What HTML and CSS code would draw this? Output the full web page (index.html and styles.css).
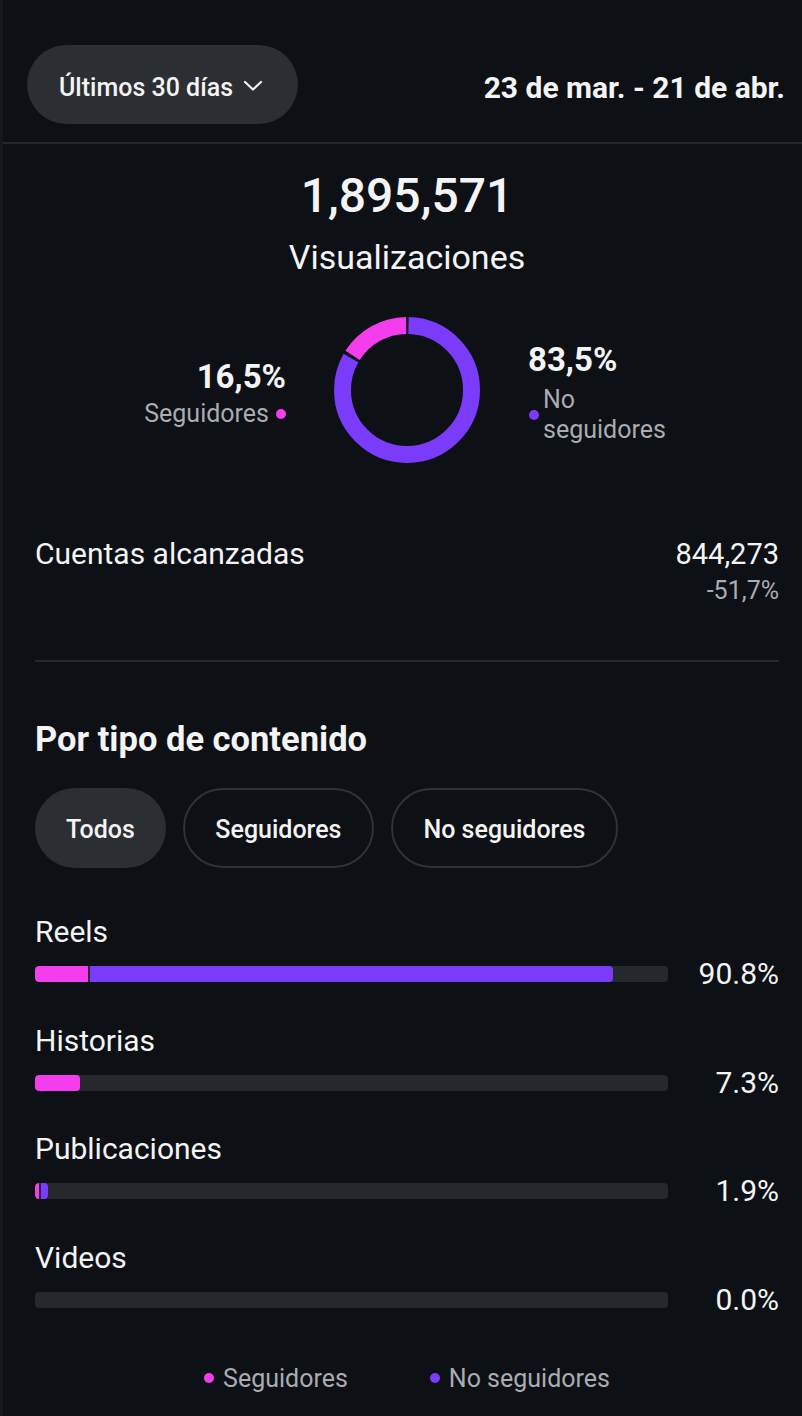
FILE: index.html
```html
<!DOCTYPE html>
<html lang="es">
<head>
<meta charset="utf-8">
<title>Visualizaciones</title>
<link rel="stylesheet" href="styles.css">
</head>
<body>
<div class="screen">
  <header class="topbar">
    <button class="range">Últimos 30 días
      <svg class="chev" width="22" height="12" viewBox="0 0 22 12"><polyline points="3,2 11,9.5 19,2" fill="none" stroke="#f2f2f2" stroke-width="2.2" stroke-linecap="round" stroke-linejoin="round"/></svg>
    </button>
    <div class="dates">23 de mar. - 21 de abr.</div>
  </header>

  <main class="content">
    <section class="summary">
      <div class="total">1,895,571</div>
      <div class="total-label">Visualizaciones</div>
      <div class="split">
        <div class="side side-left">
          <div class="pct">16,5%</div>
          <div class="key key-left"><span>Seguidores</span><i class="dot pink"></i></div>
        </div>
        <svg class="donut" width="146" height="146" viewBox="0 0 146 146">
          <g transform="rotate(-90 73 73)">
            <circle cx="73" cy="73" r="64.5" fill="none" stroke="#7a3bfb" stroke-width="17" stroke-dasharray="335.4 405.27" stroke-dashoffset="-1.5"/>
            <circle cx="73" cy="73" r="64.5" fill="none" stroke="#f43ded" stroke-width="17" stroke-dasharray="63.87 405.27" stroke-dashoffset="-339.9"/>
          </g>
        </svg>
        <div class="side side-right">
          <div class="pct">83,5%</div>
          <div class="key key-right"><i class="dot purple"></i><span class="wrap">No seguidores</span></div>
        </div>
      </div>
    </section>

    <div class="metric">
      <div class="metric-name">Cuentas alcanzadas</div>
      <div class="metric-values">
        <div class="metric-value">844,273</div>
        <div class="metric-delta">-51,7%</div>
      </div>
    </div>

    <hr class="divider">

    <h2 class="heading">Por tipo de contenido</h2>

    <div class="chips">
      <button class="chip chip-active">Todos</button>
      <button class="chip">Seguidores</button>
      <button class="chip">No seguidores</button>
    </div>

    <div class="types">
      <div class="type">
        <div class="type-name">Reels</div>
        <div class="type-bar">
          <div class="track">
            <div class="seg seg-pink" style="width:8.4%"></div>
            <div class="seg seg-purple" style="width:82.6%"></div>
          </div>
          <div class="type-pct">90.8%</div>
        </div>
      </div>
      <div class="type">
        <div class="type-name">Historias</div>
        <div class="type-bar">
          <div class="track">
            <div class="seg seg-pink seg-end" style="width:7.1%"></div>
          </div>
          <div class="type-pct">7.3%</div>
        </div>
      </div>
      <div class="type">
        <div class="type-name">Publicaciones</div>
        <div class="type-bar">
          <div class="track">
            <div class="seg seg-pink" style="width:0.7%"></div>
            <div class="seg seg-purple" style="width:1.1%"></div>
          </div>
          <div class="type-pct">1.9%</div>
        </div>
      </div>
      <div class="type">
        <div class="type-name">Videos</div>
        <div class="type-bar">
          <div class="track"></div>
          <div class="type-pct">0.0%</div>
        </div>
      </div>
    </div>

    <div class="legend">
      <div class="legend-item"><i class="dot small pink"></i><span>Seguidores</span></div>
      <div class="legend-item"><i class="dot small purple"></i><span>No seguidores</span></div>
    </div>
  </main>
</div>
</body>
</html>
```

FILE: styles.css
```css
* { box-sizing: border-box; }

html, body {
  margin: 0;
  padding: 0;
  background: #0d1014;
}

body {
  font-family: Roboto, "Noto Sans", "Liberation Sans", sans-serif;
  color: #f4f4f5;
}

.screen {
  min-height: 1416px;
  border-left: 3px solid #15181c;
  background: #0d1014;
}

/* Header */
.topbar {
  display: flex;
  align-items: center;
  justify-content: space-between;
  padding: 45px 17px 18px 24px;
  border-bottom: 2px solid #24272c;
}

.range {
  display: flex;
  align-items: center;
  gap: 9px;
  height: 79px;
  padding: 6px 34px 0 32px;
  border: none;
  border-radius: 40px;
  background: #2b2e33;
  color: #f4f4f5;
  font-family: inherit;
  font-size: 25px;
  font-weight: 500;
  line-height: 30px;
}

.chev { display: block; margin-top: -4px; }

.dates {
  font-size: 30px;
  font-weight: 700;
  line-height: 36px;
  margin-top: 7px;
}

/* Content */
.content {
  padding: 0 23px 0 32px;
}

.summary {
  display: flex;
  flex-direction: column;
  align-items: center;
}

.total {
  margin-top: 24px;
  font-size: 48px;
  font-weight: 500;
  line-height: 56px;
}

.total-label {
  margin-top: 13px;
  font-size: 34px;
  line-height: 40px;
}

.split {
  margin-top: 40px;
  width: 100%;
  display: grid;
  grid-template-columns: 1fr auto 1fr;
  column-gap: 48px;
  align-items: center;
}

.donut { display: block; }

.side { padding-top: 6px; }

.side-left {
  display: flex;
  flex-direction: column;
  align-items: flex-end;
}

.side-right {
  display: flex;
  flex-direction: column;
  align-items: flex-start;
}

.pct {
  font-size: 33px;
  font-weight: 700;
  line-height: 38px;
}

.key {
  display: flex;
  align-items: center;
  font-size: 25px;
  line-height: 30px;
  color: #a9acb1;
}

.key-left { margin-top: 3px; gap: 7px; }
.key-right { margin-top: 6px; gap: 4px; padding-left: 1px; }

.wrap { width: 130px; }

.dot {
  display: block;
  width: 10px;
  height: 10px;
  border-radius: 50%;
  flex: none;
}

.dot.small { width: 10px; height: 10px; }

.pink { background: #f43ded; }
.purple { background: #7a3bfb; }

/* Metric */
.metric {
  margin-top: 73px;
  display: flex;
  justify-content: space-between;
  align-items: flex-start;
}

.metric-name {
  font-size: 30px;
  line-height: 36px;
}

.metric-values {
  display: flex;
  flex-direction: column;
  align-items: flex-end;
}

.metric-value {
  font-size: 29px;
  line-height: 36px;
}

.metric-delta {
  margin-top: 4px;
  font-size: 25px;
  line-height: 30px;
  color: #a9acb1;
}

.divider {
  margin: 54px 0 0 0;
  border: none;
  height: 2px;
  background: #24272c;
}

.heading {
  margin: 57px 0 0 0;
  font-size: 34.5px;
  font-weight: 700;
  line-height: 41px;
}

/* Chips */
.chips {
  margin-top: 28px;
  display: flex;
  gap: 17px;
}

.chip {
  height: 80px;
  padding: 3px 30.5px 0 30.5px;
  border: 2px solid #2f3237;
  border-radius: 40px;
  background: transparent;
  color: #f4f4f5;
  font-family: inherit;
  font-size: 25px;
  font-weight: 500;
  line-height: 30px;
}

.chip-active {
  padding: 3px 29px 0 29px;
  background: #2b2e33;
  border-color: #2b2e33;
}

/* Types */
.types {
  margin-top: 46px;
  display: flex;
  flex-direction: column;
  gap: 30.7px;
}

.type-name {
  font-size: 30px;
  line-height: 36px;
}

.type-bar {
  margin-top: 6px;
  display: flex;
  align-items: center;
  justify-content: space-between;
}

.track {
  width: 633px;
  height: 16px;
  display: flex;
  gap: 2px;
  border-radius: 4px;
  overflow: hidden;
  background: #25282d;
}

.seg { height: 100%; }

.seg-pink { background: #f43ded; border-radius: 4px 0 0 4px; }
.seg-end { border-radius: 4px; }
.seg-purple { background: #7a3bfb; border-radius: 0 4px 4px 0; }

.type-pct {
  font-size: 30px;
  line-height: 36px;
  text-align: right;
}

/* Legend */
.legend {
  margin-top: 46px;
  display: flex;
  justify-content: center;
  gap: 82px;
  font-size: 25px;
  line-height: 30px;
  color: #a9acb1;
}

.legend-item {
  display: flex;
  align-items: center;
  gap: 9px;
}

.legend-item .dot { margin-top: -2px; }
```
